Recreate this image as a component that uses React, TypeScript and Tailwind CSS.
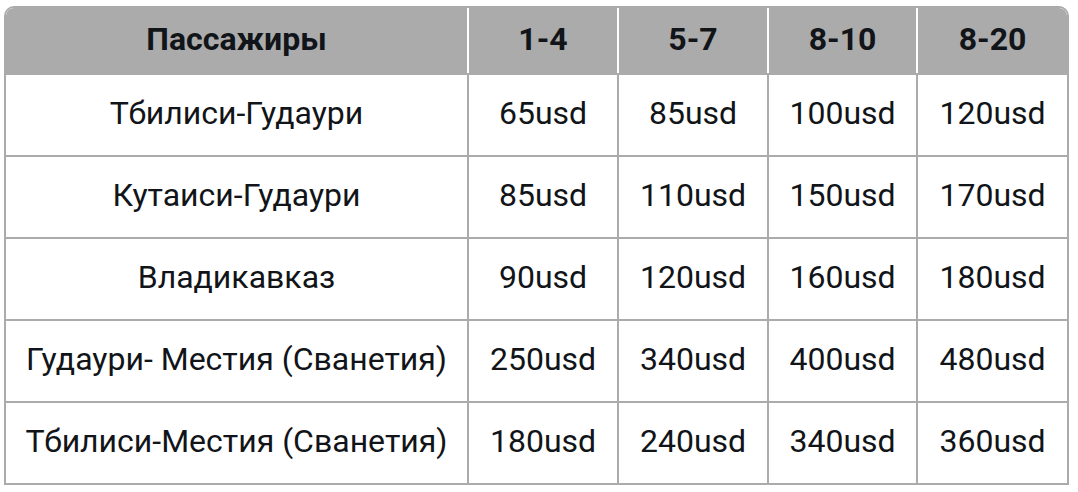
import React from 'react';

const HEADERS = ['Пассажиры', '1-4', '5-7', '8-10', '8-20'];

const ROWS: string[][] = [
  ['Тбилиси-Гудаури', '65usd', '85usd', '100usd', '120usd'],
  ['Кутаиси-Гудаури', '85usd', '110usd', '150usd', '170usd'],
  ['Владикавказ', '90usd', '120usd', '160usd', '180usd'],
  ['Гудаури- Местия (Сванетия)', '250usd', '340usd', '400usd', '480usd'],
  ['Тбилиси-Местия (Сванетия)', '180usd', '240usd', '340usd', '360usd'],
];

const COLS = 'grid grid-cols-[461px_148px_148px_147px_149px] gap-x-[2px]';

const App: React.FC = () => {
  return (
    <div className="w-[1078px] h-[492px] bg-white pl-[4px] pt-[6px] font-['Roboto',sans-serif] text-[#111418]">
      <div className="w-[1065px] border-2 border-[#ababab] rounded-t-[10px] overflow-hidden">
        <div className={`${COLS} bg-white`}>
          {HEADERS.map((h) => (
            <div key={h} className="h-[65px] pb-[4px] bg-[#ababab] flex items-center justify-center text-[32px] font-bold">
              {h}
            </div>
          ))}
        </div>
        {ROWS.map((row, i) => (
          <div key={i} className={`${COLS} bg-[#ababab] border-t-2 border-[#ababab]`}>
            {row.map((cell, j) => (
              <div key={j} className="h-[80px] pb-[5px] bg-white flex items-center justify-center text-[32px]">
                {cell}
              </div>
            ))}
          </div>
        ))}
      </div>
    </div>
  );
};

export default App;
